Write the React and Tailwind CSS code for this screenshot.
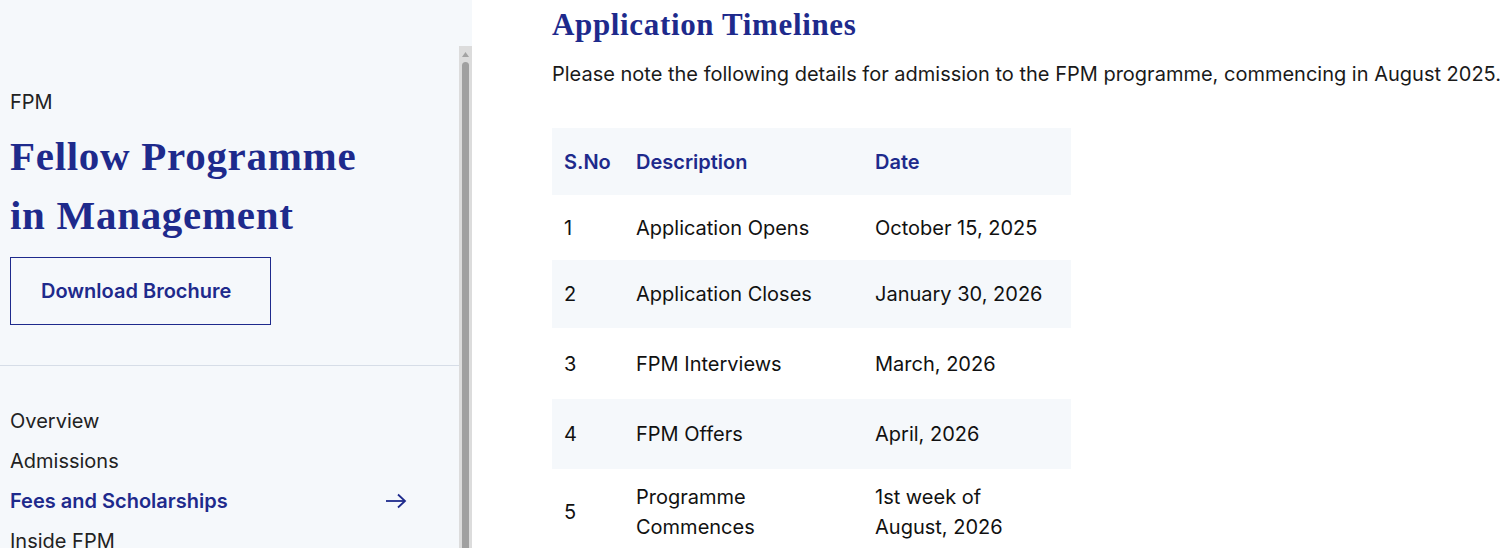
import React from "react";

const navItems = [
  { label: "Overview" },
  { label: "Admissions" },
  { label: "Fees and Scholarships", active: true },
  { label: "Inside FPM" },
];

const rows = [
  { no: "1", desc: ["Application Opens"], date: ["October 15, 2025"], h: "h-[65px]", shade: false },
  { no: "2", desc: ["Application Closes"], date: ["January 30, 2026"], h: "h-[68px]", shade: true },
  { no: "3", desc: ["FPM Interviews"], date: ["March, 2026"], h: "h-[71px]", shade: false },
  { no: "4", desc: ["FPM Offers"], date: ["April, 2026"], h: "h-[70px]", shade: true },
  { no: "5", desc: ["Programme", "Commences"], date: ["1st week of", "August, 2026"], h: "h-[86px]", shade: false },
];

const serif = { fontFamily: '"Liberation Serif", "Times New Roman", serif' };

function Sidebar() {
  return (
    <aside className="w-[472px] shrink-0 bg-[#f5f8fb] pt-[46px] flex flex-col">
      <div className="flex flex-1">
        <div className="flex-1">
          <div className="pl-[10px] pt-[44px]">
            <p className="text-[20px] leading-[24px] text-[#222222]">FPM</p>
            <h1
              className="mt-[13px] text-[41px] leading-[59px] font-bold text-[#1e2a8c] tracking-[0.7px]"
              style={serif}
            >
              Fellow Programme
              <br />
              in Management
            </h1>
            <button
              type="button"
              className="mt-[12px] w-[261px] h-[68px] border border-[#1e2a8c] pl-[30px] text-left text-[20px] font-semibold text-[#1e2a8c]"
            >
              Download Brochure
            </button>
          </div>
          <div className="mt-[40px] border-t border-[#d6dde7]" />
          <nav className="pl-[10px] pt-[35px]">
            {navItems.map((item) => (
              <div key={item.label} className="flex items-center h-[40px] pr-[52px]">
                <span
                  className={`flex-1 text-[20px] ${
                    item.active ? "font-semibold text-[#1e2a8c]" : "text-[#222222]"
                  }`}
                >
                  {item.label}
                </span>
                {item.active && (
                  <svg width="22" height="16" viewBox="0 0 22 16" fill="none" stroke="#1e2a8c" strokeWidth="1.8">
                    <path d="M1 8h19" />
                    <path d="M13 1.5L20 8l-7 6.5" />
                  </svg>
                )}
              </div>
            ))}
          </nav>
        </div>
        {/* fake scrollbar */}
        <div className="w-[13px] bg-[#dcdcdc] flex flex-col items-center">
          <svg width="9" height="8" viewBox="0 0 9 8" className="mt-[5px]">
            <path d="M4.5 1L8 6H1z" fill="#a3a3a3" />
          </svg>
          <div className="mt-[3px] w-[7px] flex-1 bg-[#a0a0a0] rounded-t-[4px]" />
        </div>
      </div>
    </aside>
  );
}

function Timeline() {
  return (
    <main className="flex-1 pl-[80px] pt-[6px]">
      <h2
        className="text-[31px] leading-[38px] font-bold text-[#1e2a8c] tracking-[0.65px]"
        style={serif}
      >
        Application Timelines
      </h2>
      <p className="mt-[17px] text-[20px] leading-[27px] text-[#1a1a1a] whitespace-nowrap">
        Please note the following details for admission to the FPM programme, commencing in August 2025.
      </p>
      <table className="mt-[40px] w-[519px] text-[20px] border-collapse">
        <thead>
          <tr className="bg-[#f5f8fb] h-[67px]">
            <th className="w-[72px] pl-[12px] text-left font-semibold text-[#1e2a8c]">S.No</th>
            <th className="w-[239px] pl-[12px] text-left font-semibold text-[#1e2a8c]">Description</th>
            <th className="pl-[12px] text-left font-semibold text-[#1e2a8c]">Date</th>
          </tr>
        </thead>
        <tbody>
          {rows.map((r) => (
            <tr key={r.no} className={`${r.h} ${r.shade ? "bg-[#f5f8fb]" : "bg-white"}`}>
              <td className="pl-[12px] text-[#111111]">{r.no}</td>
              <td className="pl-[12px] text-[#111111] leading-[30px]">
                {r.desc.map((d) => (
                  <div key={d}>{d}</div>
                ))}
              </td>
              <td className="pl-[12px] text-[#111111] leading-[30px]">
                {r.date.map((d) => (
                  <div key={d}>{d}</div>
                ))}
              </td>
            </tr>
          ))}
        </tbody>
      </table>
    </main>
  );
}

export default function App() {
  return (
    <div
      className="flex w-[1501px] h-[548px] overflow-hidden bg-white"
      style={{ fontFamily: 'Inter, "Noto Sans", sans-serif' }}
    >
      <Sidebar />
      <Timeline />
    </div>
  );
}
